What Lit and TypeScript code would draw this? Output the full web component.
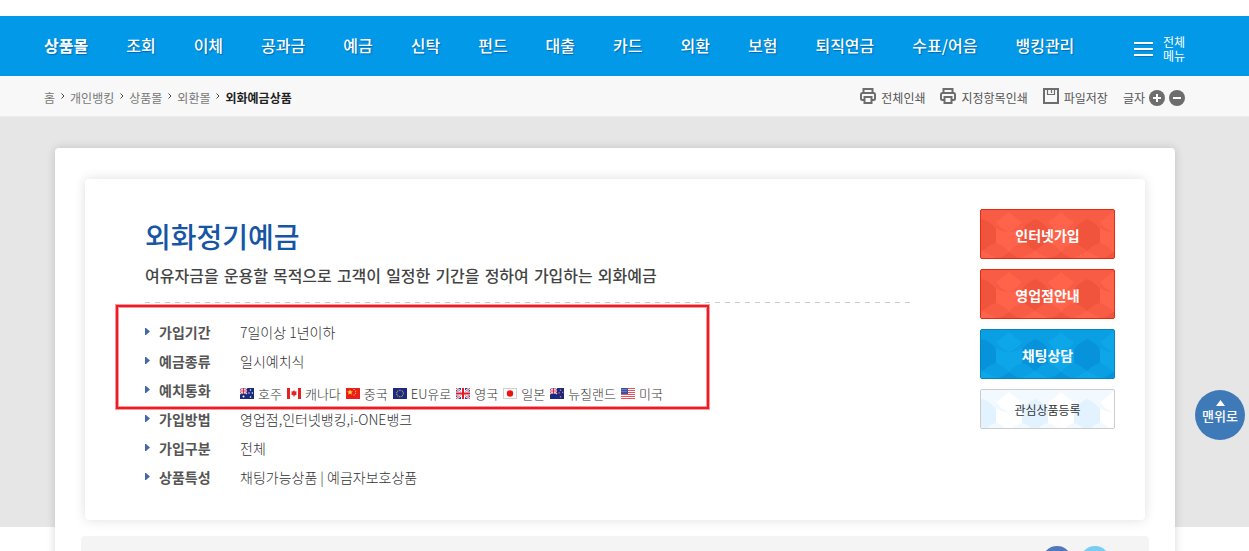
import { LitElement, html, css, svg } from "lit";
import { customElement, property } from "lit/decorators.js";

const MENU = ["상품몰", "조회", "이체", "공과금", "예금", "신탁", "펀드", "대출", "카드", "외환", "보험", "퇴직연금", "수표/어음", "뱅킹관리"];
const CRUMBS = ["홈", "개인뱅킹", "상품몰", "외환몰"];

const star = (x: number, y: number, r: number) => svg`<circle cx=${x} cy=${y} r=${r} fill="#fff"/>`;
const unionJack = svg`
  <rect width="7" height="6" fill="#2b3f94"/>
  <path d="M0 0L7 6M7 0L0 6" stroke="#f3c9d4" stroke-width="1.4"/>
  <path d="M3.5 0V6M0 3H7" stroke="#fff" stroke-width="2"/>
  <path d="M3.5 0V6M0 3H7" stroke="#e0243c" stroke-width="1"/>`;

const FLAGS: Record<string, unknown> = {
  au: svg`<rect width="14" height="11" fill="#1b2a7c"/>${unionJack}${star(3.5, 8.5, 1)}${star(10.5, 2, .7)}${star(12.3, 5, .7)}${star(9, 5, .7)}${star(10.5, 9, .8)}`,
  ca: svg`<rect width="14" height="11" fill="#fff"/><path d="M0 0h3v11H0zM11 0H14v11h-3z" fill="#e32222"/><path d="M7 2l1 1.6 1.6-.4-.4 2.2.9.5-2.2 1.7H7.3V9h-.6V7.6H6.1L3.9 5.9l.9-.5-.4-2.2 1.6.4z" fill="#e32222"/>`,
  cn: svg`<rect width="14" height="11" fill="#ee1c1c"/><path d="M4 1.5l.8 1.8 2 .1-1.5 1.3.5 2L4 5.6 2.2 6.7l.5-2L1.200 3.400l2-.1z" fill="#ffdc2e"/><path d="M7.5 1.5h1.200M9 3.300h1.200M9 5.300h1.200M7.500 7h1.200" stroke="#ffdc2e" stroke-width="1"/>`,
  eu: svg`<rect width="14" height="11" fill="#1c2a86"/><circle cx="7" cy="5.5" r="3.3" fill="none" stroke="#b9a94a" stroke-width="1.1" stroke-dasharray="1 .73"/>`,
  gb: svg`<rect width="14" height="11" fill="#2b3f94"/><path d="M0 0L14 11M14 0L0 11" stroke="#fff" stroke-width="2.4"/><path d="M0 0L14 11M14 0L0 11" stroke="#e0243c" stroke-width=".9"/><path d="M7 0V11M0 5.5H14" stroke="#fff" stroke-width="4"/><path d="M7 0V11M0 5.5H14" stroke="#e01c2c" stroke-width="2"/>`,
  jp: svg`<rect width="14" height="11" fill="#fff"/><circle cx="7" cy="5.5" r="3.2" fill="#ee1111"/><rect x=".5" y=".5" width="13" height="10" fill="none" stroke="#d0d0d0"/>`,
  nz: svg`<rect width="14" height="11" fill="#1b2a7c"/>${unionJack}<path d="M10.5 1.5v1.4M8.5 4.8h1.3M12 4.3h1.3M10.5 8v1.4" stroke="#e86a80" stroke-width="1.3"/>`,
  us: svg`<rect width="14" height="11" fill="#fff"/><path d="M0 .5H14M0 2.5H14M0 4.5H14M0 6.5H14M0 8.5H14M0 10.5H14" stroke="#e8505c" stroke-width="1"/><rect width="7" height="6" fill="#41509c"/><path d="M.5 1.5h6M.5 3.5h6" stroke="#aab2dc" stroke-width=".8" stroke-dasharray="1 1"/>`,
};
const CURRENCIES = [["au", "호주"], ["ca", "캐나다"], ["cn", "중국"], ["eu", "EU유로"], ["gb", "영국"], ["jp", "일본"], ["nz", "뉴질랜드"], ["us", "미국"]];

const printer = html`<svg class="tool-icon" viewBox="0 0 16 16" aria-hidden="true">
  <g fill="none" stroke="#6d6d6d" stroke-width="2"><path d="M3.5 4V1h9v3"/><path d="M4 12H2.5Q1 12 1 10.500V6.500Q1 5 2.500 5h11Q15 5 15 6.500v4q0 1.500-1.500 1.500H12"/><path d="M4.500 9h7v6h-7z"/></g></svg>`;
const disk = html`<svg class="tool-icon" viewBox="0 0 16 16" aria-hidden="true">
  <path d="M1 1h14v14H1z" fill="none" stroke="#6d6d6d" stroke-width="2"/><path d="M4.500 1v5.500h7V1M8.500 1v4" fill="none" stroke="#6d6d6d" stroke-width="1.200"/></svg>`;

@customElement("action-button")
class ActionButton extends LitElement {
  @property() kind = "red";
  static styles = css`
    :host { display: block; }
    button {
      position: relative; display: block; width: 100%; height: 50px; padding: 2px 0 0; overflow: hidden;
      border: 1px solid #e02b10; border-radius: 2px; background: #f85c44; color: #fff;
      font: 700 14px/20px "Noto Sans CJK KR", sans-serif; cursor: pointer;
    }
    .weave { position: absolute; inset: 0; width: 100%; height: 100%; }
    .light { fill: #ff634a; }
    .dark { fill: #f0543d; }
    .text { position: relative; }
    .blue { background: #0a9ee3; border-color: #0684bf; }
    .blue .light { fill: #0da6e9; }
    .blue .dark { fill: #0693dc; }
    .white { height: 40px; background: #f2f9ff; border-color: #ccc; color: #333; font-weight: 400; font-size: 12px; }
    .white .light { fill: #fff; }
    .white .dark { fill: #e3f2ff; }
  `;
  render() {
    const blob = "M54 9Q62 12 67 19V33Q60 35 54 41Q48 35 41 33V19Q47 12 54 9Z";
    const foot = "M54 41Q61 45 67 48V50H41V48Q47 45 54 41Z";
    return html`<button type="button" class=${this.kind}>
      <svg class="weave" aria-hidden="true">
        <defs><pattern id="weave" width="52" height="50" patternUnits="userSpaceOnUse">
          <path class="dark" d=${blob}/><path class="dark" d=${blob} transform="translate(-52 0)"/>
          <path class="light" d=${foot}/><path class="light" d=${foot} transform="translate(-52 0)"/>
          <path class="light" d="M15 12Q22 8 28 2Q34 8 41 12Q36 19 28 22Q20 19 15 12Z"/>
          <path class="light" d="M15 18Q20 22 28 22Q36 22 41 18V33Q33 35 28 42Q23 35 15 33Z"/>
          <path class="dark" d="M15 49Q22 47 28 42Q34 47 41 49V50H15Z"/>
        </pattern></defs>
        <rect width="100%" height="100%" fill="url(#weave)"/>
      </svg>
      <span class="text"><slot></slot></span>
    </button>`;
  }
}

@customElement("app-root")
class AppRoot extends LitElement {
  static styles = css`
    :host {
      display: block; position: relative; height: 100vh; overflow: hidden; background: #fff;
      box-sizing: border-box; padding-top: 16px; color: #555;
      font: 400 12px/20px "Noto Sans CJK KR", sans-serif;
    }
    a { color: inherit; text-decoration: none; }
    button { font: inherit; color: inherit; border: 0; padding: 0; background: none; cursor: pointer; }
    h1, p, dl, dd, dt, ul, ol { margin: 0; padding: 0; list-style: none; }
    .bar { padding: 0 64px 0 44px; }
    .gnb { display: flex; align-items: center; justify-content: space-between; height: 60px; background: #0299e9; color: #fff; }
    .menu { display: flex; gap: 38px; padding-bottom: 2px; font-size: 16px; font-weight: 500; line-height: 24px; white-space: nowrap; text-shadow: 1px 1px 1px rgba(0, 60, 120, .5); }
    .first { font-weight: 700; }
    .all { display: flex; align-items: center; gap: 10px; padding-top: 6px; line-height: 14px; text-align: left; }
    .burger { width: 19px; height: 15px; }
    .path { display: flex; align-items: center; justify-content: space-between; height: 40px; background: #f8f8f8; border-bottom: 1px solid #ececec; }
    .crumbs, .tools { display: flex; align-items: center; padding-top: 3px; white-space: nowrap; }
    .crumbs { color: #777; }
    .crumbs li { display: flex; align-items: center; }
    .crumbs svg { width: 4px; height: 7px; margin: 0 5px 2px 6px; }
    .crumbs .here { color: #222; font-weight: 700; }
    .tools { gap: 15px; }
    .tools a, .zoom { display: flex; align-items: center; gap: 5px; }
    .zoom { gap: 4px; }
    .tool-icon { width: 16px; height: 16px; margin-bottom: 4px; }
    .round { width: 16px; height: 16px; display: block; }
    .stage { padding: 31px 74px 0 55px; background: linear-gradient(#e6e6e6 410px, #fff 410px); }
    .card { padding: 31px 26px 0; height: 500px; background: #fff; border-radius: 4px; box-shadow: 0 0 10px rgba(0, 0, 0, .16); }
    .panel {
      position: relative; display: flex; justify-content: space-between; gap: 60px; margin: 0 4px;
      padding: 30px 30px 28px 60px; border-radius: 4px; background: #fff; box-shadow: 0 0 12px rgba(0, 0, 0, .13);
    }
    .info { flex: 1; max-width: 766px; }
    h1 { padding-top: 7px; font-size: 28px; font-weight: 500; line-height: 40px; color: #1656a5; }
    .lead { padding: 9px 0 13px; font-family: "DejaVu Sans", "Noto Sans CJK KR", sans-serif; font-size: 16px; font-weight: 500; line-height: 24px; color: #444; }
    .dash { height: 1px; background: repeating-linear-gradient(90deg, #ccc 0 5px, transparent 5px 10px); }
    .facts { padding-top: 15px; font-size: 14px; line-height: 29px; }
    .row { display: flex; align-items: center; height: 29px; }
    dt { display: flex; align-items: center; gap: 9px; width: 95px; font-weight: 700; }
    dt svg { width: 5px; height: 7px; margin-bottom: 2px; }
    dd { font-weight: 300; color: #333; }
    .flags { display: flex; gap: 5px; padding-top: 5px; font-size: 13px; white-space: nowrap; }
    .flags li { display: flex; align-items: center; gap: 4px; }
    .flags svg { width: 14px; height: 11px; }
    .actions { width: 135px; display: flex; flex-direction: column; gap: 10px; }
    .mark { position: absolute; left: 31px; top: 126px; width: 589px; height: 100px; border: 2px solid #ed1c24; box-shadow: 0 0 0 1px #f9999d, inset 0 0 0 1px #f9999d; pointer-events: none; }
    .share { display: flex; justify-content: flex-end; gap: 8px; margin-top: 16px; padding: 10px 39px; border-radius: 4px; background: #f4f4f4; }
    .share a { width: 30px; height: 30px; border-radius: 50%; background: #5079bd; }
    .share .sky { background: #78cdf3; }
    .top { position: absolute; right: 4px; top: 390px; width: 50px; height: 50px; border-radius: 50%; background: #3e7ab8; color: #fff; display: flex; flex-direction: column; align-items: center; font-weight: 500; font-size: 13px; line-height: 20px; padding-top: 10px; box-sizing: border-box; }
    .top svg { width: 9px; height: 6px; }
  `;

  fact(name: string, value: unknown) {
    return html`<div class="row"><dt><svg viewBox="0 0 5 7" aria-hidden="true"><path d="M0 0H1L5 3.500L1 7H0Z" fill="#4568ac"/></svg>${name}</dt><dd>${value}</dd></div>`;
  }

  render() {
    return html`
      <header>
        <nav class="bar gnb">
          <ul class="menu">${MENU.map((m, i) => html`<li><a href="#" class=${i === 0 ? "first" : ""}>${m}</a></li>`)}</ul>
          <button class="all" type="button">
            <svg class="burger" viewBox="0 0 19 15" aria-hidden="true"><path d="M1 2.500H19M1 8.500H19M1 14.500H19" stroke="#0676b8"/><path d="M0 1H19M0 7H19M0 13H19" stroke="#fff" stroke-width="2"/></svg>
            <span>전체<br />메뉴</span>
          </button>
        </nav>
        <div class="bar path">
          <ol class="crumbs">
            ${CRUMBS.map((c) => html`<li><a href="#">${c}</a><svg viewBox="0 0 4 7" aria-hidden="true"><path d="M.5 .5L3 3L.5 5.500" fill="none" stroke="#444"/></svg></li>`)}
            <li class="here">외화예금상품</li>
          </ol>
          <div class="tools">
            <a href="#">${printer}전체인쇄</a>
            <a href="#">${printer}지정항목인쇄</a>
            <a href="#">${disk}파일저장</a>
            <div class="zoom">글자
              <button type="button" aria-label="글자 크게"><svg class="round" viewBox="0 0 16 16"><circle cx="8" cy="8" r="8" fill="#6d6d6d"/><path d="M8 4V12M4 8H12" stroke="#fff" stroke-width="2"/></svg></button>
              <button type="button" aria-label="글자 작게"><svg class="round" viewBox="0 0 16 16"><circle cx="8" cy="8" r="8" fill="#6d6d6d"/><path d="M4 8H12" stroke="#fff" stroke-width="2"/></svg></button>
            </div>
          </div>
        </div>
      </header>
      <main class="stage">
        <div class="card">
          <section class="panel">
            <div class="info">
              <h1>외화정기예금</h1>
              <p class="lead">여유자금을 운용할 목적으로 고객이 일정한 기간을 정하여 가입하는 외화예금</p>
              <div class="dash"></div>
              <dl class="facts">
                ${this.fact("가입기간", "7일이상 1년이하")}
                ${this.fact("예금종류", "일시예치식")}
                ${this.fact("예치통화", html`<ul class="flags">${CURRENCIES.map(([id, name]) => html`<li><svg viewBox="0 0 14 11" aria-hidden="true">${FLAGS[id]}</svg>${name}</li>`)}</ul>`)}
                ${this.fact("가입방법", "영업점,인터넷뱅킹,i-ONE뱅크")}
                ${this.fact("가입구분", "전체")}
                ${this.fact("상품특성", "채팅가능상품 | 예금자보호상품")}
              </dl>
            </div>
            <div class="actions">
              <action-button>인터넷가입</action-button>
              <action-button>영업점안내</action-button>
              <action-button kind="blue">채팅상담</action-button>
              <action-button kind="white">관심상품등록</action-button>
            </div>
            <div class="mark"></div>
          </section>
          <div class="share"><a href="#" aria-label="Facebook"></a><a href="#" class="sky" aria-label="Twitter"></a></div>
        </div>
      </main>
      <button class="top" type="button"><svg viewBox="0 0 9 6" aria-hidden="true"><path d="M4.500 0L9 6H0Z" fill="#fff"/></svg>맨위로</button>
    `;
  }
}
